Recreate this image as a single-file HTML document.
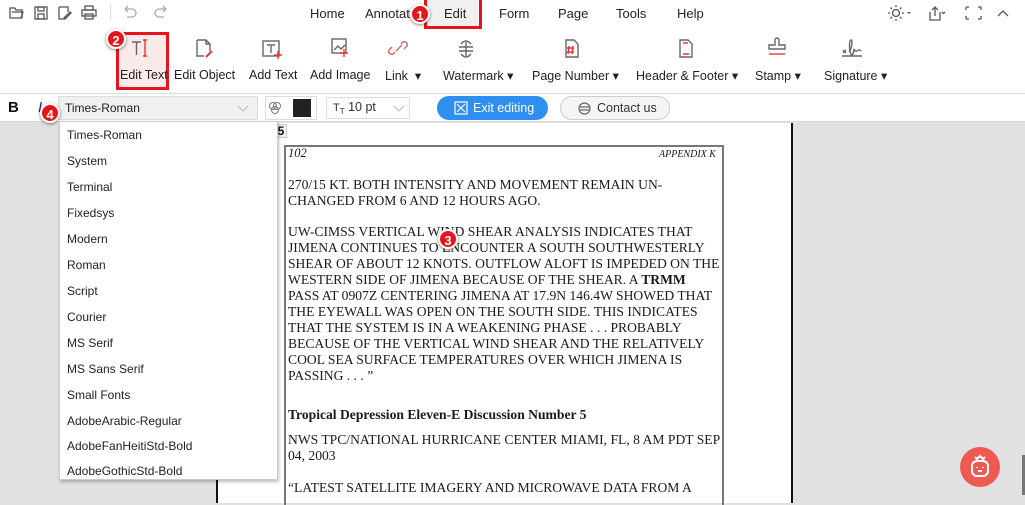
<!DOCTYPE html>
<html><head><style>
*{margin:0;padding:0;box-sizing:border-box}
body{width:1025px;height:495px;overflow:hidden;background:#e1e1e1;font-family:"Liberation Sans",sans-serif;position:relative;color:#222}
.a{position:absolute}
.top{left:0;top:0;width:1025px;height:94px;background:#fff;border-bottom:1px solid #ddd}
.bar2{left:0;top:94px;width:1025px;height:28px;background:#fff;border-bottom:1px solid #d8d8d8}
.menu{top:6px;font-size:13px}
.lbl{top:68px;font-size:12.5px;white-space:nowrap}
.badge{width:20px;height:20px;border-radius:50%;background:#e8141c;color:#fff;font-size:13px;font-weight:bold;text-align:center;line-height:20px;border:2px solid #fff;box-shadow:0 1px 3px rgba(0,0,0,.5)}
.red{border:3px solid #e8141c}
.page{left:216px;top:123px;width:577px;height:380px;background:#fff;border-left:2px solid #111;border-right:2px solid #111}
.doc{font-family:"Liberation Serif",serif;font-size:13.6px;color:#1a1a1a;white-space:nowrap;left:288px}
.dd{left:59px;top:121px;width:219px;height:359px;background:#fff;border:1px solid #ccc;box-shadow:1px 2px 3px rgba(0,0,0,.25)}
.dd div{position:absolute;left:7px;font-size:12px;color:#222}
svg{position:absolute}
</style></head><body>
<div class="a top"></div>
<svg style="left:9px;top:5px" width="90" height="16" fill="none" stroke="#555" stroke-width="1.3">
<path d="M1 3h5l1 2h6v8H1z M3 7h11l-2 6"/>
<rect x="26" y="2" width="12" height="12"/><rect x="29" y="2" width="6" height="4"/><rect x="29" y="9" width="6" height="5"/>
<path d="M50 2h9v5M50 2v12h5M55 13l6-6 1 1-6 6h-1z"/>
<rect x="76" y="1" width="8" height="4"/><rect x="73" y="5" width="14" height="6"/><rect x="76" y="9" width="8" height="5"/>
</svg>
<div class="a" style="left:110px;top:4px;width:1px;height:16px;background:#ddd"></div>
<svg style="left:122px;top:4px" width="50" height="16" fill="none" stroke="#aaa" stroke-width="1.3"><path d="M3 5h7a4 4 0 010 8H5M3 5l3-3M3 5l3 3"/><path d="M44 5h-7a4 4 0 000 8h5M44 5l-3-3M44 5l-3 3"/></svg>
<div class="a menu" style="left:310px">Home</div>
<div class="a menu" style="left:365px">Annotat</div>
<div class="a" style="left:424px;top:0;width:58px;height:29px;background:#f0f0f0" ></div>
<div class="a red" style="left:424px;top:0;width:58px;height:29px;border-top:none"></div>
<div class="a menu" style="left:444px">Edit</div>
<div class="a menu" style="left:499px">Form</div>
<div class="a menu" style="left:558px">Page</div>
<div class="a menu" style="left:616px">Tools</div>
<div class="a menu" style="left:677px">Help</div>
<div class="a badge" style="left:410px;top:4px">1</div>
<svg style="left:888px;top:4px" width="125" height="18" fill="none" stroke="#555" stroke-width="1.3">
<circle cx="8" cy="9" r="3.5"/><path d="M8 1v2M8 15v2M0 9h2M14 9h2M2.5 3.5l1.5 1.5M12 13l1.5 1.5M2.5 14.5L4 13M12 5l1.5-1.5"/>
<path d="M19 8l2 2 2-2" fill="#555" stroke="none"/>
<path d="M42 8v8h10V8M47 3v9M44 6l3-3 3 3M54 8l1.5 1.5L57 8"/>
<path d="M78 3h3M78 3v3M93 3h-3M93 3v3M78 15h3M78 15v-3M93 15h-3M93 15v-3"/>
<path d="M110 12l5-5 5 5"/>
</svg>
<div class="a" style="left:116px;top:32px;width:53px;height:58px;background:#fbeaea"></div>
<div class="a red" style="left:116px;top:32px;width:53px;height:58px"></div>
<svg style="left:130px;top:37px" width="800" height="28" fill="none" stroke="#666" stroke-width="1.4">
<path d="M2 5h9M6.5 5v13" /><path d="M15 3v16M13 3h4M13 19h4" stroke="#e33"/>
<path d="M67 3h9l4 4v7M67 3v16h7M80 7h-4V3" /><path d="M76 20l6-6" stroke="#e33" stroke-width="2"/>
<rect x="133" y="4" width="16" height="15"/><path d="M137 8h8M141 8v8"/><path d="M148 14v8M144 18h8" stroke="#e33"/>
<rect x="202" y="2" width="14" height="14"/><path d="M204 13l4-4 3 3 4-4"/><path d="M214 12v8M210 16h8" stroke="#e33"/>
<path d="M265 15l-2 2a3 3 0 01-4-4l3-3M271 7l2-2a3 3 0 014 4l-3 3M266 14l6-6" stroke="#c66"/>
<path d="M336 5v14M329 10h14M329 14h14M331 7q5 -6 10 0M331 17q5 6 10 0"/>
<path d="M436 3h8l4 4v13h-12z"/><path d="M439 9l-1 8M443 9l-1 8M437 11h7M437 15h7" stroke="#e33"/>
<path d="M550 3h8l4 4v13h-12z"/><path d="M553 6h5M553 17h6" stroke="#e33"/>
<path d="M645 3a2 2 0 014 0v5h6v4h-16v-4h6z"/><path d="M639 17h16" stroke="#e33"/>
<path d="M713 13l3 3M716 13l-3 3M719 15c3-4 4-12 2-12s-2 10 0 14 3-5 3-5 1 3 3 2 2-2 4 0M712 19h20"/>
</svg>
<div class="a lbl" style="left:120px">Edit Text</div>
<div class="a lbl" style="left:174px">Edit Object</div>
<div class="a lbl" style="left:249px">Add Text</div>
<div class="a lbl" style="left:310px">Add Image</div>
<div class="a lbl" style="left:385px">Link &nbsp;▾</div>
<div class="a lbl" style="left:443px">Watermark ▾</div>
<div class="a lbl" style="left:532px">Page Number ▾</div>
<div class="a lbl" style="left:636px">Header &amp; Footer ▾</div>
<div class="a lbl" style="left:755px">Stamp ▾</div>
<div class="a lbl" style="left:824px">Signature ▾</div>
<div class="a badge" style="left:106px;top:29px">2</div>
<div class="a bar2"></div>
<div class="a" style="left:8px;top:99px;font-size:15px;font-weight:bold;color:#111">B</div>
<div class="a" style="left:38px;top:99px;font-size:15px;font-style:italic;color:#333">I</div>
<div class="a" style="left:58px;top:96px;width:200px;height:24px;background:#f0f0f0;border:1px solid #ddd"></div>
<div class="a" style="left:65px;top:101px;font-size:12px">Times-Roman</div>
<svg style="left:236px;top:103px" width="14" height="10" fill="none" stroke="#bbb"><path d="M2 3l5 5 5-5"/></svg>
<div class="a" style="left:265px;top:96px;width:52px;height:24px;border:1px solid #ddd;background:#fff"></div>
<svg style="left:268px;top:101px" width="14" height="14" fill="none" stroke="#777"><circle cx="5" cy="5" r="3.5"/><circle cx="9" cy="5" r="3.5"/><circle cx="7" cy="9" r="3.5"/></svg>
<div class="a" style="left:293px;top:99px;width:18px;height:18px;background:#222"></div>
<div class="a" style="left:326px;top:97px;width:84px;height:22px;border:1px solid #ddd"></div>
<div class="a" style="left:333px;top:100px;font-size:12.5px;color:#333"><span style="font-size:11px">T<sub style="font-size:8px">T</sub></span> 10 pt</div>
<svg style="left:392px;top:103px" width="14" height="10" fill="none" stroke="#bbb"><path d="M2 3l5 5 5-5"/></svg>
<div class="a" style="left:437px;top:96px;width:111px;height:24px;background:#2e8ff0;border-radius:12px"></div>
<svg style="left:454px;top:101px" width="14" height="14" fill="none" stroke="#fff" stroke-width="1.2"><rect x="1" y="1" width="12" height="12"/><path d="M3 3l8 8M11 3l-8 8"/></svg>
<div class="a" style="left:473px;top:101px;font-size:12.5px;color:#fff">Exit editing</div>
<div class="a" style="left:560px;top:96px;width:110px;height:24px;border:1px solid #ccc;border-radius:12px;background:#f5f5f5"></div>
<svg style="left:577px;top:101px" width="15" height="15" fill="none" stroke="#666" stroke-width="1.2"><circle cx="7.5" cy="7.5" r="5.5"/><path d="M3 6h9M3 9h9"/></svg>
<div class="a" style="left:597px;top:101px;font-size:12.5px;color:#333">Contact us</div>
<div class="a page"></div>
<div class="a" style="left:275px;top:124px;width:12px;height:14px;background:#f0f0f0;border:1px solid #ccc;font-size:12px;font-weight:bold;line-height:12px;text-align:center;color:#111">5</div>
<div class="a" style="left:284px;top:145px;width:440px;height:360px;border:2px solid #777;border-bottom:none"></div>
<div class="a doc" style="top:146px;font-style:italic;font-size:12.5px">102</div>
<div class="a doc" style="top:149px;left:659px;font-style:italic;font-size:10px">APPENDIX K</div>
<div class="a doc" style="top:177px;line-height:16px">270/15 KT. BOTH INTENSITY AND MOVEMENT REMAIN UN-<br>CHANGED FROM 6 AND 12 HOURS AGO.</div>
<div class="a doc" style="top:224px;line-height:16px">UW-CIMSS VERTICAL WIND SHEAR ANALYSIS INDICATES THAT<br>JIMENA CONTINUES TO ENCOUNTER A SOUTH SOUTHWESTERLY<br>SHEAR OF ABOUT 12 KNOTS. OUTFLOW ALOFT IS IMPEDED ON THE<br>WESTERN SIDE OF JIMENA BECAUSE OF THE SHEAR. A <b>TRMM</b><br>PASS AT 0907Z CENTERING JIMENA AT 17.9N 146.4W SHOWED THAT<br>THE EYEWALL WAS OPEN ON THE SOUTH SIDE. THIS INDICATES<br>THAT THE SYSTEM IS IN A WEAKENING PHASE . . . PROBABLY<br>BECAUSE OF THE VERTICAL WIND SHEAR AND THE RELATIVELY<br>COOL SEA SURFACE TEMPERATURES OVER WHICH JIMENA IS<br>PASSING . . . ”</div>
<div class="a doc" style="top:407px;font-weight:bold">Tropical Depression Eleven-E Discussion Number 5</div>
<div class="a doc" style="top:432px;line-height:16px">NWS TPC/NATIONAL HURRICANE CENTER MIAMI, FL, 8 AM PDT SEP<br>04, 2003</div>
<div class="a doc" style="top:480px">“LATEST SATELLITE IMAGERY AND MICROWAVE DATA FROM A</div>
<div class="a badge" style="left:438px;top:229px">3</div>
<div class="a dd">
<div style="top:6px">Times-Roman</div><div style="top:32px">System</div><div style="top:58px">Terminal</div><div style="top:84px">Fixedsys</div><div style="top:110px">Modern</div><div style="top:136px">Roman</div><div style="top:162px">Script</div><div style="top:188px">Courier</div><div style="top:214px">MS Serif</div><div style="top:240px">MS Sans Serif</div><div style="top:266px">Small Fonts</div><div style="top:292px">AdobeArabic-Regular</div><div style="top:317px">AdobeFanHeitiStd-Bold</div><div style="top:342px">AdobeGothicStd-Bold</div>
</div>
<div class="a badge" style="left:40px;top:103px">4</div>
<div class="a" style="left:960px;top:447px;width:40px;height:40px;border-radius:50%;background:#ee5a52"></div>
<svg style="left:968px;top:453px" width="24" height="28" fill="none" stroke="#fff" stroke-width="2"><path d="M7 4l2 2 3-3 3 3 2-2"/><rect x="4" y="8" width="16" height="15" rx="5"/><path d="M9 14v1M15 14v1M10 18h4"/></svg>
<div class="a" style="left:1022px;top:455px;width:3px;height:40px;background:#777"></div>
</body></html>
